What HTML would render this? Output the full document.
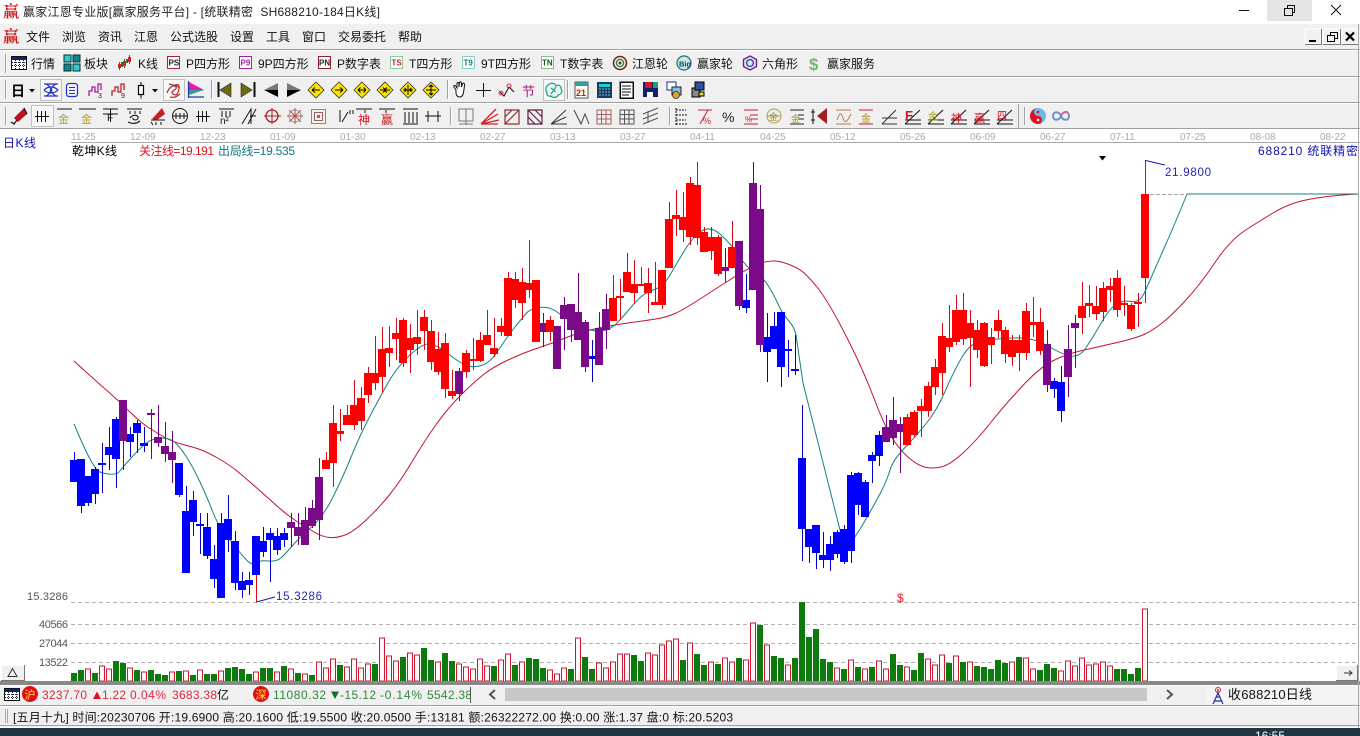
<!DOCTYPE html>
<html lang="zh-CN">
<head>
<meta charset="utf-8">
<title>赢家江恩专业版</title>
<style>
html,body{margin:0;padding:0;background:#fff;width:1360px;height:736px;overflow:hidden}
svg{display:block;position:absolute;left:0;top:0}
text{font-family:"Liberation Sans","Noto Sans CJK SC",sans-serif;font-size:12px;fill:#111;white-space:pre}
.d{font-size:10px;fill:#aaa}
.t{font-size:12px;fill:#222}
.a{font-size:11px;fill:#555}
.b{font-size:8px;font-weight:bold}
.c{shape-rendering:crispEdges}
</style>
</head>
<body>
<svg width="1360" height="736" viewBox="0 0 1360 736" xmlns="http://www.w3.org/2000/svg">
<rect width="1360" height="736" fill="#fff"/>

<!-- title bar -->
<text x="3" y="17" style="font-size:16px;fill:#c81818;font-family:'Noto Serif CJK SC',serif;font-weight:bold">赢</text>
<text x="23" y="16" textLength="357" class="t" xml:space="preserve">赢家江恩专业版[赢家服务平台] - [统联精密  SH688210-184日K线]</text>
<rect x="1267" y="0" width="45" height="21" fill="#e5e5e5"/>
<path d="M1239 10.5H1249M1331 5L1341 15M1341 5L1331 15" stroke="#111" fill="none"/>
<path class="c" d="M1284.5 8.5H1292.5V15.5H1284.5ZM1287.5 8.5V5.5H1294.5V12.5H1292.5" stroke="#111" fill="none"/>

<!-- toolbars background -->
<rect class="c" y="24" width="1360" height="104" fill="#f0f0f0"/>
<path class="c" d="M0 49.5H1360M0 76.5H1360M0 102.5H1360M0 128.5H1360" stroke="#a0a0a0"/>
<path class="c" d="M0 50.5H1360M0 77.5H1360M0 103.5H1360" stroke="#fff"/>

<!-- menu -->
<text x="3" y="42" style="font-size:16px;fill:#c81818;font-family:'Noto Serif CJK SC',serif;font-weight:bold">赢</text>
<text x="26" y="41">文件</text><text x="62" y="41">浏览</text><text x="98" y="41">资讯</text><text x="134" y="41">江恩</text><text x="170" y="41">公式选股</text><text x="230" y="41">设置</text><text x="266" y="41">工具</text><text x="302" y="41">窗口</text><text x="338" y="41">交易委托</text><text x="398" y="41">帮助</text>
<!-- MDI buttons -->
<g class="c">
<rect x="1305" y="29" width="16" height="15" fill="#f0f0f0" stroke="#fff"/><path d="M1321.5 29V44.5H1305" stroke="#777" fill="none"/>
<rect x="1323" y="29" width="17" height="15" fill="#f0f0f0" stroke="#fff"/><path d="M1340.5 29V44.5H1323" stroke="#777" fill="none"/>
<rect x="1342" y="29" width="16" height="15" fill="#f0f0f0" stroke="#fff"/><path d="M1358.5 29V44.5H1342" stroke="#777" fill="none"/>
<path d="M1309 41H1316" stroke="#000" stroke-width="2"/>
<path d="M1327.5 35.5H1334.5V41.5H1327.5ZM1330.5 35V32.5H1337.5V38.5H1335" stroke="#000" fill="none"/>
</g>
<path d="M1346 32.5L1354 40.5M1354 32.5L1346 40.5" stroke="#000" stroke-width="2.2"/>

<!-- row 1 -->
<path class="c" d="M5.5 54V73" stroke="#a0a0a0"/><path class="c" d="M6.5 54V73" stroke="#fff"/>
<g class="c">
<rect x="11.5" y="56.5" width="15" height="13" fill="#fff" stroke="#111"/><rect x="12" y="57" width="14" height="3" fill="#102080"/>
<path d="M12 62.5H26M12 65.5H26M15.5 60V69M19.5 60V69M23.5 60V69" stroke="#223" fill="none" stroke-dasharray="1 1"/>
<rect x="64" y="55" width="7" height="7" fill="#30c8c8" stroke="#033"/><rect x="73" y="55" width="7" height="7" fill="#108888" stroke="#033"/><rect x="64" y="64" width="7" height="7" fill="#108888" stroke="#033"/><rect x="73" y="64" width="7" height="7" fill="#30c8c8" stroke="#033"/>
<path d="M119.5 62V70M124.5 59V68M129.5 55V64" stroke="#d02030"/><path d="M118 64h3v4h-3zM123 61h3v5h-3zM128 57h3v5h-3z" fill="#d02030"/>
<rect x="121" y="62" width="2" height="5" fill="#108030"/><rect x="126" y="59" width="2" height="4" fill="#108030"/>
<rect x="167.5" y="56.5" width="12" height="12" fill="#fff" stroke="#b02030"/>
<rect x="239.5" y="56.5" width="12" height="12" fill="#fff" stroke="#a020a0"/>
<rect x="318.5" y="56.5" width="12" height="12" fill="#fff" stroke="#902030"/>
<rect x="390.5" y="56.5" width="12" height="12" fill="#fff" stroke="#20a040" stroke-dasharray="1 1"/>
<rect x="462.5" y="56.5" width="12" height="12" fill="#fff" stroke="#10a0a0" stroke-dasharray="1 1"/>
<rect x="541.5" y="56.5" width="12" height="12" fill="#fff" stroke="#208020" stroke-dasharray="1 1"/>
</g>
<text x="168.5" y="65.5" class="b" style="fill:#222">PS</text><text x="240.5" y="65.5" class="b" style="fill:#a020a0">P9</text><text x="319" y="65.5" class="b" style="fill:#222">PN</text><text x="391.5" y="65.5" class="b" style="fill:#c02030">TS</text><text x="463.5" y="65.5" class="b" style="fill:#108080">T9</text><text x="542" y="65.5" class="b" style="fill:#106020">TN</text>
<text x="31" y="68">行情</text><text x="84" y="68">板块</text><text x="138" y="68">K线</text><text x="186" y="68">P四方形</text><text x="258" y="68">9P四方形</text><text x="337" y="68">P数字表</text><text x="409" y="68">T四方形</text><text x="481" y="68">9T四方形</text><text x="560" y="68">T数字表</text><text x="632" y="68">江恩轮</text><text x="697" y="68">赢家轮</text><text x="762" y="68">六角形</text><text x="827" y="68">赢家服务</text>
<circle cx="620" cy="63" r="6.5" fill="#e8f0e0" stroke="#703020" stroke-width="1.6"/><circle cx="620" cy="63" r="3.6" fill="none" stroke="#208050" stroke-width="1.3"/><circle cx="620" cy="63" r="1.5" fill="#a02020"/>
<circle cx="684" cy="63" r="7" fill="#c8e8e0" stroke="#207070" stroke-width="1.2"/><text x="679" y="66.5" style="font-size:7.5px;fill:#104080;font-weight:bold">Big</text>
<polygon points="750,56 756.5,59.5 756.5,66.5 750,70 743.5,66.5 743.5,59.5" fill="#e8e0f8" stroke="#702080" stroke-width="1.4"/><circle cx="750" cy="63" r="3.4" fill="#d0f0f0" stroke="#2040a0" stroke-width="1.3"/>
<text x="809" y="70" style="font-size:17px;font-weight:bold;fill:#70b870">$</text>

<!-- row 2 -->
<path class="c" d="M5.5 80V99M211.5 80V99M447.5 80V99M567.5 80V99" stroke="#a0a0a0"/><path class="c" d="M6.5 80V99M212.5 80V99M448.5 80V99M568.5 80V99" stroke="#fff"/>
<g class="c">
<rect x="40.5" y="79.5" width="21" height="21" fill="#f8f8f8" stroke="#c0c0c0"/>
<rect x="163.5" y="79.5" width="21" height="21" fill="#f8f8f8" stroke="#c0c0c0"/>
<rect x="543.5" y="79.5" width="21" height="21" fill="#f8f8f8" stroke="#c0c0c0"/>
</g>
<text x="11" y="96" style="font-size:14px;font-weight:bold;fill:#000">日</text>
<polygon points="29,89 35,89 32,92.5" fill="#111"/><polygon points="152,89 158,89 155,92.5" fill="#111"/>
<path d="M44 84h14M44 96h14M46 84c6 3 6 9 0 12M56 84c-6 3-6 9 0 12M44 90c4-4 10-4 14 0c-4 4-10 4-14 0" stroke="#2030c0" stroke-width="1.2" fill="none"/>
<rect x="66.5" y="83.5" width="11" height="13" rx="2.5" fill="#f4f4ff" stroke="#2030c0" stroke-width="1.2"/><path d="M69 87.5h6M69 90.5h6M69 93.5h6" stroke="#2030c0"/>
<path d="M89 96V91h3V87h3v5h3V84h3v6" stroke="#a020a0" stroke-width="1.3" fill="none"/><text x="98" y="98" style="font-size:7px;fill:#222">3</text>
<path d="M112 96V91h3V87h3v5h3V84h3v6" stroke="#c02030" stroke-width="1.3" fill="none"/><text x="121" y="98" style="font-size:7px;fill:#222">9</text>
<rect x="138.5" y="85.5" width="5" height="9" fill="#fff" stroke="#000" stroke-width="1.2"/><path d="M141 82v3.5M141 94.5v4" stroke="#000"/>
<path d="M167 93c2-6 7-9 9-6c2 3-7 4-3 7c4 3 6-2 6-7c0-3-3-3-5-1M169 84c3 1 8 1 11 4M170 97c4 1 6 0 10-3" stroke="#a03030" stroke-width="1.2" fill="none"/>
<polygon points="189,82 204,90 189,90" fill="#f010c0"/><polygon points="189,90 204,90 189,95" fill="#30a090"/><path d="M188.5 81V98M188 97H204" stroke="#2040a0" stroke-width="1.2" fill="none"/>
<g class="c"><path d="M218.5 82V97M254.5 82V97" stroke="#111" stroke-width="2"/></g>
<polygon points="220,90 231,83 231,97" fill="#6e6a10" stroke="#222" stroke-width=".6"/><polygon points="252,90 241,83 241,97" fill="#6e6a10" stroke="#222" stroke-width=".6"/>
<polygon points="264,90 278,83 278,90" fill="#777"/><polygon points="264,90 278,90 278,97" fill="#000"/>
<polygon points="301,90 287,83 287,90" fill="#777"/><polygon points="301,90 287,90 287,97" fill="#000"/>
<g stroke="#333" stroke-width=".8" fill="#ffe400">
<polygon points="316,82 324,90 316,98 308,90"/><polygon points="339,82 347,90 339,98 331,90"/><polygon points="362,82 370,90 362,98 354,90"/><polygon points="385,82 393,90 385,98 377,90"/><polygon points="408,82 416,90 408,98 400,90"/><polygon points="431,82 439,90 431,98 423,90"/>
</g>
<g stroke="#000" fill="none" stroke-width="1">
<path d="M312 90h8M312 90l3-2.5M312 90l3 2.5M335 90h8M343 90l-3-2.5M343 90l-3 2.5M358 90h8M358 90l2.5-2.5M358 90l2.5 2.5M366 90l-2.5-2.5M366 90l-2.5 2.5"/>
<path d="M380 90h10M383 87.5l2.5 2.5l-2.5 2.5M387 87.5l-2.5 2.5l2.5 2.5M403 90h10M408 85v10M404.5 88l2 2l-2 2M411.5 88l-2 2l2 2M426 90h10M431 85v10M429 87l2-2l2 2M429 93l2 2l2-2"/>
</g>
<path d="M456 90l-2-3c-1-2 1-2 2-.5l1 1.5V84c0-2 2-2 2 0v3l.5-4c.2-1.8 2-1.5 2 .5V87l1-3c.5-1.5 2-1 2 .5c0 2-.5 5-1 8c-.5 3-2 4.5-4 4.5c-2 0-3-1.5-3.5-3.5z" fill="#fff" stroke="#111"/>
<path class="c" d="M483.5 83V97M476 90.5H491" stroke="#111"/>
<path d="M500 92l4 4l5-9l5 5" stroke="#111" fill="none"/><circle cx="501" cy="93" r="2" fill="none" stroke="#d03040"/><circle cx="509" cy="86" r="2" fill="none" stroke="#d03040"/>
<text x="522" y="96" style="font-size:13px;fill:#a02080">节</text>
<path d="M547 86c3-4 9-3 9 0c2-2 6 0 5 3c2 2 0 6-3 6c-1 3-6 3-7 1c-3 1-5-2-4-4c-2-1-1-5 0-6zM551 88l5 4M556 87l-5 7" stroke="#20a080" fill="#e8f8f4" stroke-width="1.2"/>
<g class="c">
<rect x="575" y="82" width="13" height="16" fill="#fffff0" stroke="#555"/><rect x="575" y="82" width="13" height="4" fill="#30a090"/>
<rect x="597" y="82" width="15" height="16" fill="#104060"/><rect x="599" y="84" width="11" height="3" fill="#20d0d0"/><path d="M599 89h11M599 92h11M599 95h11" stroke="#9ad" stroke-dasharray="2 1"/>
<rect x="620" y="82" width="13" height="16" fill="#fff" stroke="#111" stroke-width="1.5"/><path d="M622 86h9M622 89h9M622 92h9M622 95h7" stroke="#111"/>
<rect x="643" y="82" width="15" height="15" fill="#102070"/><rect x="645" y="82" width="7" height="6" fill="#e01020"/><rect x="653" y="82" width="5" height="6" fill="#20a060"/><rect x="647" y="92" width="6" height="5" fill="#fff"/>
<rect x="667" y="82" width="9" height="8" fill="#fff" stroke="#203080"/><rect x="672" y="87" width="9" height="8" fill="#80c0e0" stroke="#222"/>
<rect x="692" y="88" width="8" height="9" fill="#888" stroke="#000"/><rect x="695" y="82" width="9" height="8" fill="#3050a0" stroke="#000"/><rect x="699" y="92" width="5" height="4" fill="#e0d040" stroke="#000"/>
</g>
<text x="576" y="96" style="font-size:9px;font-weight:bold;fill:#c02020">21</text>
<circle cx="676" cy="95" r="3.5" fill="#e0a020" stroke="#222" stroke-width=".7"/>

<!-- row 3 -->
<path class="c" d="M5.5 107V125M450.5 107V125M669.5 107V125M1024.5 107V125M1018.5 104V128" stroke="#a0a0a0"/><path class="c" d="M6.5 107V125M451.5 107V125M670.5 107V125M1025.5 107V125" stroke="#fff"/>
<g class="c"><rect x="31.5" y="105.5" width="22" height="21" fill="#f8f8f8" stroke="#c0c0c0"/></g>
<polygon points="14,118 24,108 27,114 18,122" fill="#c01020"/><path d="M11 122l3 2l3-4M24 108l3 6" stroke="#111" fill="none" stroke-width="1.2"/>
<g stroke="#111" fill="none" stroke-width="1">
<path d="M35 116.5H49M37.5 111V122M41.5 111V122M45.5 111V122"/>
<path d="M57 109H72M79 109H96M103 109H118M110.5 109V122M103 114H118"/>
<path d="M127 109H142M130 111v3M135 111v3M140 111v3"/><path d="M130 118c3-4 9-3 8 0c0 3-6 2-5 0M128 122c4 2 8 2 12-1" stroke-width="1.1"/>
<path d="M151 120H165M151 122l2 3M156 122v3M161 122v3"/>
<circle cx="180" cy="116" r="7.5"/><path d="M173 116H187M176 113v6M180 113v6M184 113v6"/>
<path d="M196 116.5H210M198.5 111V122M202.5 111V122M206.5 111V122"/>
<path d="M219 109H234M222 111v6M226 111v6M230 111v6"/>
<path d="M242 124L251 109V124M248 124l8-15M250 116h6"/>
<path d="M340 122V110M342 122L348 112M350 110v4M353 110v4M365 110v3M386 110v3"/>
<path d="M356 109H372M379 109H395M403 109H418M405 112v11M409 112v11M413 112v11M417 112v11M403 124H418"/>
<path d="M425 116H441M428 111V122M438 111V122M427 116l-2 0"/>
</g>
<text x="58" y="123" style="font-size:11px;fill:#b0a020">金</text><text x="81" y="123" style="font-size:11px;fill:#b0a020">金</text>
<text x="107" y="121" style="font-size:10px;fill:#111">F</text>
<text x="220" y="124" style="font-size:10px;fill:#111">n²</text>
<polygon points="152,119 162,108 165,114 157,120" fill="#c02020"/>
<circle cx="272" cy="116" r="6" fill="none" stroke="#a02020" stroke-width="1.3"/><path d="M264 116H281M272 108V124" stroke="#a02020"/>
<circle cx="295" cy="116" r="6" fill="none" stroke="#999"/><path d="M287 116H303M295 108V124M289 110L301 122M301 110L289 122" stroke="#b05050"/>
<rect x="311.5" y="109.5" width="14" height="14" fill="none" stroke="#888"/><rect x="314.5" y="112.5" width="8" height="8" fill="none" stroke="#a06060"/><rect x="317" y="115" width="3" height="3" fill="#777"/>
<text x="358" y="124" style="font-size:12px;fill:#e01020">神</text><text x="381" y="124" style="font-size:12px;fill:#c02020">赢</text>
<!-- fibonacci icons -->
<g fill="none" stroke-width="1">
<path d="M459 109H473V121H459ZM466 109V125M459 124H473" stroke="#777"/>
<path d="M481 124L496 109M481 124L498 114M481 124L499 120M481 124H498" stroke="#d02020" stroke-width="1.3"/>
<path d="M505 110H519V124H505ZM505 124L519 110M505 117L512 110" stroke="#903030" stroke-width="1.2"/>
<path d="M528 110H542V124H528ZM528 110L542 124M528 117L535 124M535 110L542 117" stroke="#602040" stroke-width="1.2"/>
<path d="M551 124L566 110M551 124H567M551 124L566 117" stroke="#333"/>
<path d="M574 110L581 124L585 114L589 124" stroke="#444"/>
<path d="M597 110H611V124H597ZM597 114.5H611M597 119H611M601.5 110V124M606 110V124" stroke="#a06060"/>
<path d="M620 110H634V124H620ZM620 114.5H634M620 119H634M624.5 110V124M629 110V124" stroke="#555"/>
<path d="M643 114L658 108M643 119L658 113M643 124L658 118M648 111V123" stroke="#555"/>
<path d="M676 110H686M676 115H688M676 120H686M676 124H688M676 108V126" stroke="#111" stroke-dasharray="2 1"/>
<path d="M698 110H712M700 124L708 110" stroke="#d02030"/>
<path d="M744 110H758M744 124H758M750 115H758M750 119H758" stroke="#c02030"/>
<path d="M767 116H781" stroke="#b0a040"/><circle cx="774" cy="116" r="7" stroke="#b0a040"/>
<path d="M790 110H804M790 124H804M798 115H804M798 119H804" stroke="#222"/>
<path d="M813 109V124M811 112h4M811 120h4" stroke="#111"/><polygon points="817,116 827,108 827,124" fill="#a02020"/>
<path d="M836 110H851M836 124H851M837 120c3-8 4-8 6-2s4 4 8-4" stroke="#b08050"/>
<path d="M859 110H873M859 124H873" stroke="#c02030"/>
<path d="M882 124L896 110M882 124H897M882 118H897" stroke="#333"/>
<path d="M905 124L920 110M905 124H921M905 120H921" stroke="#111"/>
<path d="M928 124L943 110M928 124H944M928 120H944" stroke="#111"/>
<path d="M951 124L966 110M951 124H967M951 120H967" stroke="#111"/>
<path d="M974 124L989 110M974 124H990M974 120H990" stroke="#111"/>
<path d="M997 124L1012 110M997 124H1013M997 120H1013" stroke="#111"/>
</g>
<text x="722" y="122" style="font-size:14px;fill:#222">%</text>
<text x="703" y="124" style="font-size:9px;fill:#d02030">%</text>
<text x="745" y="122" style="font-size:8px;fill:#d02030">%</text>
<text x="769" y="120" style="font-size:9px;fill:#a09020">金</text>
<text x="791" y="122" style="font-size:9px;fill:#a09020">金</text>
<text x="861" y="122" style="font-size:10px;fill:#b09020">金</text>
<text x="905" y="120" style="font-size:13px;font-weight:bold;fill:#e01020">F</text>
<text x="928" y="120" style="font-size:10px;fill:#a0a020">金</text>
<text x="951" y="122" style="font-size:11px;fill:#d01020">神</text>
<text x="974" y="122" style="font-size:11px;fill:#d01020">赢</text>
<text x="997" y="119" style="font-size:10px;fill:#d01020">四</text>
<!-- yin yang + infinity -->
<circle cx="1038" cy="116" r="8" fill="#70b8e8"/><path d="M1038 108a8 8 0 0 0 0 16a4 4 0 0 0 0-8a4 4 0 0 1 0-8z" fill="#e01020"/><circle cx="1038" cy="112" r="1.3" fill="#e01020"/><circle cx="1038" cy="120" r="1.3" fill="#fff"/>
<path d="M1061 116c-2-5-8-5-8 0s6 5 8 0" fill="none" stroke="#7090d0" stroke-width="2"/><path d="M1061 116c2-5 8-5 8 0s-6 5-8 0" fill="none" stroke="#7090d0" stroke-width="2"/><path d="M1061 116c2-5 6-5 7-3" fill="none" stroke="#e06080" stroke-width="1.6"/>

<!-- date axis -->
<g>
<text x="71" y="140" class="d">11-25</text><text x="130" y="140" class="d">12-09</text><text x="200" y="140" class="d">12-23</text><text x="270" y="140" class="d">01-09</text><text x="340" y="140" class="d">01-30</text><text x="410" y="140" class="d">02-13</text><text x="480" y="140" class="d">02-27</text><text x="550" y="140" class="d">03-13</text><text x="620" y="140" class="d">03-27</text><text x="690" y="140" class="d">04-11</text><text x="760" y="140" class="d">04-25</text><text x="830" y="140" class="d">05-12</text><text x="900" y="140" class="d">05-26</text><text x="970" y="140" class="d">06-09</text><text x="1040" y="140" class="d">06-27</text><text x="1110" y="140" class="d">07-11</text><text x="1180" y="140" class="d">07-25</text><text x="1250" y="140" class="d">08-08</text><text x="1320" y="140" class="d">08-22</text>
</g>
<path class="c" d="M71 142.5H1360" stroke="#a8a8a8"/>
<text x="3" y="147" textLength="33" style="fill:#1010c0">日K线</text>
<text x="72" y="155" textLength="45" style="fill:#000">乾坤K线</text>
<text x="139" y="155" textLength="75" style="fill:#e01020">关注线=19.191</text>
<text x="218" y="155" textLength="77" style="fill:#157878">出局线=19.535</text>
<text x="1258" y="155" textLength="100" xml:space="preserve" style="fill:#1010b0">688210 统联精密</text>

<!-- grid lines -->
<g class="c" stroke="#b0b0b0" stroke-dasharray="4 3">
<path d="M71 602.5H1358M71 624.5H1358M71 643.5H1358M71 662.5H1358"/>
</g>
<path class="c" d="M71 628.5H1358" stroke="#eee" stroke-dasharray="2 2"/>
<text x="27" y="600" class="a" textLength="41">15.3286</text>
<text x="39" y="628" class="a" textLength="29">40566</text>
<text x="39" y="647" class="a" textLength="29">27044</text>
<text x="39" y="666" class="a" textLength="29">13522</text>

<!-- moving averages -->
<path fill="none" stroke="#c41230" stroke-width="1" d="M74 361Q97 382 108 391.5Q119 401 129.5 411.5Q140 422 148.5 427.5Q157 433 165 437.5Q173 442 183 444.5Q193 447 200 449.5Q207 452 218.5 458.5Q230 465 240 473.5Q250 482 258.5 489.5Q267 497 277 506Q287 515 297 521.5Q307 528 315 532.5Q323 537 330 537.5Q337 538 345 535Q353 532 365 521Q377 510 388.5 496Q400 482 412.5 461Q425 440 436.5 424Q448 408 460.5 395.5Q473 383 483 375Q493 367 508 360Q523 353 538 348Q553 343 566.5 337.5Q580 332 596.5 328.5Q613 325 631.5 322.5Q650 320 658.5 318.5Q667 317 675 313.5Q683 310 700 299Q717 288 733.5 277.5Q750 267 761.5 263Q773 259 785 263Q797 267 803.5 272.5Q810 278 818.5 289Q827 300 838.5 321.5Q850 343 858.5 361.5Q867 380 876 403.5Q885 427 892.5 438.5Q900 450 908.5 457.5Q917 465 924.5 467Q932 469 941 467Q950 465 963.5 452.5Q977 440 990 423.5Q1003 407 1021.5 387Q1040 367 1053.5 360.5Q1067 354 1080 351Q1093 348 1115 343Q1137 338 1145 334Q1153 330 1161.5 323.5Q1170 317 1185 301Q1200 285 1215 262.5Q1230 240 1246.5 229.5Q1263 219 1273 213Q1283 207 1293 203.5Q1303 200 1320 197.5Q1337 195 1358 194"/>
<path fill="none" stroke="#1a7f7f" stroke-width="1" d="M74 424Q85 450 90 459Q95 468 97.5 470.5Q100 473 108.5 474Q117 475 120 471Q123 467 131.5 457.5Q140 448 146.5 443Q153 438 161.5 438Q170 438 175 442.5Q180 447 186.5 457Q193 467 200 482Q207 497 212 510Q217 523 222.5 530Q228 537 234 545Q240 553 246 559.5Q252 566 256 563Q260 560 268.5 561Q277 562 282 557Q287 552 293.5 544.5Q300 537 311.5 527Q323 517 333 497Q343 477 351.5 456Q360 435 370 416Q380 397 388.5 382Q397 367 410 355Q423 343 430 344Q437 345 448.5 354Q460 363 466.5 365.5Q473 368 481.5 365.5Q490 363 498.5 350Q507 337 515 327Q523 317 526.5 313Q530 309 540 307.5Q550 306 558.5 313Q567 320 580 326Q593 332 601.5 331Q610 330 616.5 323.5Q623 317 633 305Q643 293 653 290Q663 287 670 275Q677 263 684.5 250.5Q692 238 701 231.5Q710 225 721 235Q732 245 739.5 256.5Q747 268 755 272.5Q763 277 769 287Q775 297 778.5 305Q782 313 788.5 320.5Q795 328 796 335L803 383L840 530Q845 548 850 543Q855 538 866 519Q877 500 882 490Q887 480 890 470Q893 460 905 447.5Q917 435 927 422.5Q937 410 945 391.5Q953 373 961.5 358Q970 343 981.5 341Q993 339 1013 338Q1033 337 1048 346Q1063 355 1071.5 356Q1080 357 1086.5 347Q1093 337 1101.5 322.5Q1110 308 1116.5 304Q1123 300 1131.5 301.5Q1140 303 1145 291.5Q1150 280 1163.5 249.5Q1177 219 1187 194H1358"/>

<!-- candles: wicks & bodies -->
<g class="c" fill="none">
<path stroke="#0000d0" d="M74.5 452V482M81.5 459V513M88.5 476V506M95.5 467V504M102.5 443V493M109.5 427V470M116.5 417V488M130.5 427V457M137.5 420V453M144.5 427V452M179.5 463V497M186.5 486V573M193.5 491V536M200.5 513V554M207.5 513V559M214.5 545V588M221.5 513V598M228.5 495V552M235.5 531V590M242.5 572V598M249.5 572V595M263.5 527V557M270.5 528V582M277.5 528V555M284.5 528V547M592.5 340V382M746.5 274V313M767.5 313V382M774.5 312V349M781.5 312V387M788.5 340V377M795.5 335V375M802.5 405V561M809.5 529V563M816.5 525V569M823.5 532V568M830.5 536V571M837.5 530V558M844.5 525V564M851.5 472V563M858.5 472V515M865.5 480V517M872.5 452V483M879.5 431V466M1054.5 378V398M1061.5 366V422"/>
<path stroke="#700080" d="M123.5 400V470M151.5 409V459M158.5 405V447M165.5 422V462M172.5 431V483M291.5 513V547M298.5 513V545M305.5 507V545M312.5 500V528M319.5 458V540M459.5 368V401M543.5 313V347M564.5 297V350M571.5 304V342M578.5 273V340M585.5 320V372M599.5 312V365M606.5 294V349M725.5 248V282M739.5 241V310M753.5 162V290M760.5 185V352M886.5 415V442M893.5 397V445M900.5 417V473M1047.5 330V392M1068.5 325V397M1075.5 315V368"/>
<path stroke="#dc0818" d="M326.5 452V469M333.5 405V487M340.5 409V441M347.5 405V425M354.5 380V430M361.5 387V430M368.5 367V403M375.5 336V390M382.5 327V393M389.5 326V367M396.5 318V360M403.5 318V367M410.5 324V373M417.5 310V355M424.5 310V350M431.5 320V370M438.5 332V375M445.5 333V398M452.5 370V399M466.5 350V378M473.5 338V370M480.5 332V362M487.5 310V345M494.5 318V357M501.5 318V336M508.5 272V336M515.5 272V308M522.5 268V320M529.5 240V298M536.5 280V342M550.5 316V341M613.5 275V321M620.5 279V320M627.5 253V292M634.5 260V304M641.5 267V286M648.5 268V313M655.5 262V305M662.5 270V309M669.5 202V268M676.5 190V236M683.5 192V242M690.5 177V245M697.5 162V245M704.5 227V252M711.5 227V260M718.5 235V276M732.5 221V268M907.5 414V446M914.5 410V437M921.5 399V437M928.5 382V417M935.5 359V395M942.5 323V395M949.5 305V352M956.5 295V345M963.5 293V345M970.5 310V387M977.5 320V358M984.5 322V367M991.5 328V364M998.5 310V338M1005.5 327V363M1012.5 335V366M1019.5 335V371M1026.5 303V360M1033.5 297V337M1040.5 308V355M1082.5 282V334M1089.5 285V317M1096.5 286V320M1103.5 282V321M1110.5 278V302M1117.5 270V317M1124.5 286V316M1131.5 303V331M1138.5 293V327M1145.5 160V303M256.5 575V602"/>
<path stroke="#0000ff" stroke-width="8" d="M74 460V482M81 459V506M88 476V503M95 469V494M102 463V465M109 447V455M116 419V459M130 434V442M137 423V433M144 443V446M179 463V495M186 511V573M193 500V522M200 524V526M207 527V556M214 559V579M221 523V598M228 519V540M235 541V583M242 581V590M249 580V585M256 536V575M263 541V552M270 533V540M277 536V550M284 533V540M592 356V359M746 300V308M767 337V352M774 326V349M781 312V367M788 349V351M795 369V371M802 458V529M809 529V547M816 525V553M823 555V560M830 544V560M837 532V554M844 529V562M851 475V551M858 473V505M865 482V517M872 455V461M879 435V456M1054 381V389M1061 382V411"/>
<path stroke="#7a0a8a" stroke-width="8" d="M123 400V441M151 413V415M158 437V443M165 446V454M172 452V460M291 522V528M298 527V536M305 520V545M312 508V526M319 477V520M459 371V394M543 323V332M557 326V369M564 305V319M571 304V330M578 312V340M585 322V367M599 328V365M606 309V330M725 267V271M739 241V306M753 183V290M760 209V345M886 427V442M893 420V438M900 424V432M1047 344V385M1068 349V377M1075 323V328"/>
<path stroke="#ff0000" stroke-width="8" d="M326 460V469M333 423V463M340 431V434M347 415V425M354 405V425M361 398V421M368 373V395M375 373V383M382 349V377M389 348V353M396 333V339M403 320V363M410 338V350M417 337V344M424 317V331M431 331V362M438 349V372M445 343V389M452 391V396M466 353V372M473 359V361M480 340V361M487 335V345M494 348V354M501 326V332M508 278V336M515 279V300M522 282V303M529 283V290M536 280V342M550 320V332M613 298V321M620 296V298M627 272V292M634 284V293M641 284V286M648 283V293M655 302V305M662 270V305M669 219V268M676 215V219M683 217V230M690 183V237M697 185V238M704 232V252M711 237V251M718 237V274M732 247V268M907 417V445M914 412V435M921 406V411M928 386V411M935 367V387M942 336V373M949 338V347M956 310V342M963 310V339M970 323V338M977 330V350M984 323V366M991 337V345M998 320V331M1005 330V354M1012 340V357M1019 340V353M1026 311V353M1033 322V325M1040 322V351M1082 306V318M1089 303V306M1096 306V314M1103 288V312M1110 286V290M1117 278V310M1124 303V305M1131 305V329M1138 302V304M1145 194V278"/>
</g>

<!-- annotations -->
<path d="M1145.5 160.5L1165 165M256.5 602L275 597" stroke="#1818b0" fill="none"/>
<path class="c" d="M1150 194.5H1187" stroke="#aaa" stroke-dasharray="4 2"/>
<text x="1165" y="176" textLength="46" style="font-size:11.5px;fill:#2424c0">21.9800</text>
<text x="276" y="600" textLength="46" style="font-size:11.5px;fill:#2424c0">15.3286</text>
<polygon points="1099,156 1106,156 1102.5,160.5" fill="#000"/>
<text x="897" y="602" style="font-size:12px;fill:#e02030">$</text>

<!-- volume -->
<g class="c">
<path fill="none" stroke="#0c7a0c" stroke-width="6" d="M74 673V681M81 670V681M95 673V681M116 661V681M123 663V681M137 670V681M151 670V681M158 674V681M165 675V681M179 671V681M193 675V681M207 674V681M214 674V681M228 668V681M235 667V681M242 669V681M249 674V681M263 668V681M270 668V681M284 666V681M298 673V681M312 675V681M340 665V681M375 664V681M403 657V681M424 648V681M431 660V681M445 653V681M452 661V681M494 666V681M515 665V681M529 658V681M536 659V681M543 668V681M571 669V681M585 657V681M592 669V681M634 655V681M641 661V681M683 660V681M697 654V681M704 665V681M718 664V681M739 658V681M760 625V681M774 656V681M781 658V681M795 658V681M802 602V681M809 637V681M816 629V681M823 659V681M830 662V681M844 669V681M858 667V681M872 667V681M893 654V681M900 665V681M914 670V681M921 653V681M949 663V681M963 662V681M977 666V681M984 667V681M991 669V681M998 660V681M1005 663V681M1019 657V681M1040 670V681M1047 664V681M1054 668V681M1117 669V681M1124 669V681M1131 674V681M1138 668V681"/>
<path fill="#fff6f6" stroke="#cc1830" d="M85.5 669h5V681h-5zM99.5 666h5V681h-5zM106.5 669h5V681h-5zM127.5 668h5V681h-5zM141.5 672h5V681h-5zM169.5 672h5V681h-5zM183.5 671h5V681h-5zM197.5 670h5V681h-5zM218.5 671h5V681h-5zM253.5 672h5V681h-5zM274.5 672h5V681h-5zM288.5 669h5V681h-5zM302.5 674h5V681h-5zM316.5 662h5V681h-5zM323.5 668h5V681h-5zM330.5 659h5V681h-5zM344.5 667h5V681h-5zM351.5 659h5V681h-5zM358.5 668h5V681h-5zM365.5 664h5V681h-5zM379.5 638h5V681h-5zM386.5 656h5V681h-5zM393.5 661h5V681h-5zM407.5 653h5V681h-5zM414.5 655h5V681h-5zM435.5 662h5V681h-5zM456.5 664h5V681h-5zM463.5 667h5V681h-5zM470.5 669h5V681h-5zM477.5 659h5V681h-5zM484.5 666h5V681h-5zM498.5 660h5V681h-5zM505.5 654h5V681h-5zM519.5 662h5V681h-5zM547.5 670h5V681h-5zM554.5 674h5V681h-5zM561.5 668h5V681h-5zM575.5 638h5V681h-5zM596.5 663h5V681h-5zM603.5 668h5V681h-5zM610.5 662h5V681h-5zM617.5 654h5V681h-5zM624.5 654h5V681h-5zM645.5 653h5V681h-5zM652.5 655h5V681h-5zM659.5 645h5V681h-5zM666.5 641h5V681h-5zM673.5 639h5V681h-5zM687.5 643h5V681h-5zM708.5 662h5V681h-5zM722.5 658h5V681h-5zM729.5 662h5V681h-5zM743.5 660h5V681h-5zM750.5 623h5V681h-5zM764.5 645h5V681h-5zM785.5 665h5V681h-5zM834.5 668h5V681h-5zM848.5 660h5V681h-5zM862.5 669h5V681h-5zM876.5 661h5V681h-5zM883.5 669h5V681h-5zM904.5 667h5V681h-5zM925.5 659h5V681h-5zM932.5 665h5V681h-5zM939.5 655h5V681h-5zM953.5 656h5V681h-5zM967.5 662h5V681h-5zM1009.5 662h5V681h-5zM1023.5 658h5V681h-5zM1030.5 669h5V681h-5zM1058.5 671h5V681h-5zM1065.5 661h5V681h-5zM1072.5 666h5V681h-5zM1079.5 658h5V681h-5zM1086.5 665h5V681h-5zM1093.5 664h5V681h-5zM1100.5 662h5V681h-5zM1107.5 666h5V681h-5zM1142.5 609h5V681h-5z"/>
</g>

<!-- small buttons -->
<g class="c">
<rect x="1.5" y="665.5" width="23" height="15" fill="#f0f0f0" stroke="#fff"/><path d="M24.5 665V680.5H1" stroke="#777" fill="none"/>
<rect x="1336.5" y="665.5" width="21" height="15" fill="#f0f0f0" stroke="#fff"/><path d="M1357.5 665V680.5H1336" stroke="#777" fill="none"/>
<path d="M1344 673H1352" stroke="#333"/>
</g>
<polygon points="12.5,668.5 17,676.5 8,676.5" fill="none" stroke="#333"/>
<path d="M1349 670.5l3 2.5l-3 2.5" fill="none" stroke="#333"/>

<!-- bottom chrome -->
<rect class="c" y="681" width="1360" height="4" fill="#888"/>
<rect class="c" y="685" width="1360" height="43" fill="#f0f0f0"/>
<path class="c" d="M0 685.5H1360M0 727.5H1360" stroke="#fff"/>
<path class="c" d="M0 705.5H1360M0 725.5H1360" stroke="#a0a0a0"/>
<path class="c" d="M0 706.5H1360" stroke="#fff"/>
<path class="c" d="M1358.5 24V728" stroke="#a8a8a8"/>

<!-- index row -->
<g class="c">
<rect x="4.5" y="688.5" width="15" height="12" fill="#fff" stroke="#111"/><rect x="5" y="689" width="14" height="3" fill="#102080"/>
<path d="M5 694.5H19M5 697.5H19M8.5 692V700M12.5 692V700M16.5 692V700" stroke="#223" stroke-dasharray="1 1"/>
</g>
<circle cx="30" cy="694" r="8" fill="#e01010"/><text x="24.5" y="698.5" style="font-size:11px;fill:#ffe040">沪</text>
<text x="42" y="699" textLength="45" style="font-size:12px;fill:#e02840">3237.70</text>
<polygon points="93,699 101,699 97,691.5" fill="#e01020"/>
<text x="102" y="699" textLength="24" style="fill:#e02840">1.22</text>
<text x="130" y="699" textLength="36" style="fill:#e02840">0.04%</text>
<text x="172" y="699" textLength="45" style="fill:#e02840">3683.38</text>
<text x="217" y="699" style="fill:#111">亿</text>
<circle cx="261" cy="694" r="8" fill="#e01010"/><text x="255.5" y="698.5" style="font-size:11px;fill:#ffe040">深</text>
<text x="273" y="699" textLength="53" style="fill:#2c8a3c">11080.32</text>
<polygon points="331,691.5 339,691.5 335,699" fill="#107030"/>
<text x="340" y="699" textLength="36" style="fill:#2c8a3c">-15.12</text>
<text x="380" y="699" textLength="42" style="fill:#2c8a3c">-0.14%</text>
<text x="427" y="699" textLength="45" style="fill:#2c8a3c">5542.38</text>
<!-- scrollbar -->
<g class="c">
<rect x="470" y="686" width="737" height="18" fill="#f0f0f0"/>
<path d="M470.5 687V703" stroke="#555"/>
<rect x="505" y="688" width="642" height="13" fill="#c8c8c8"/>
<rect x="1207" y="686" width="151" height="18" fill="#f4f4f4"/>
</g>
<path d="M495 690l-5 4.5l5 4.5M1167 690l5 4.5l-5 4.5" fill="none" stroke="#555" stroke-width="2"/>
<path d="M1218 689v4M1213 704l5-11l5 11M1214.5 701h7M1216 697h4" stroke="#1838a0" fill="none" stroke-width="1.2"/><circle cx="1218" cy="690" r="2.5" fill="none" stroke="#d02030"/>
<text x="1228" y="699" textLength="84" style="font-size:13px;fill:#111">收688210日线</text>

<!-- status row -->
<path class="c" d="M5.5 709V723M7.5 709V723" stroke="#a8a8a8"/>
<text x="13" y="721.5" textLength="720" xml:space="preserve" style="fill:#111">[五月十九] 时间:20230706 开:19.6900 高:20.1600 低:19.5500 收:20.0500 手:13181 额:26322272.00 换:0.00 涨:1.37 盘:0 标:20.5203</text>

<!-- taskbar -->
<rect class="c" y="728" width="1360" height="8" fill="#1f3644"/>
<text x="1255" y="740" style="font-size:12px;fill:#fff">16:55</text>
</svg>
</body>
</html>
